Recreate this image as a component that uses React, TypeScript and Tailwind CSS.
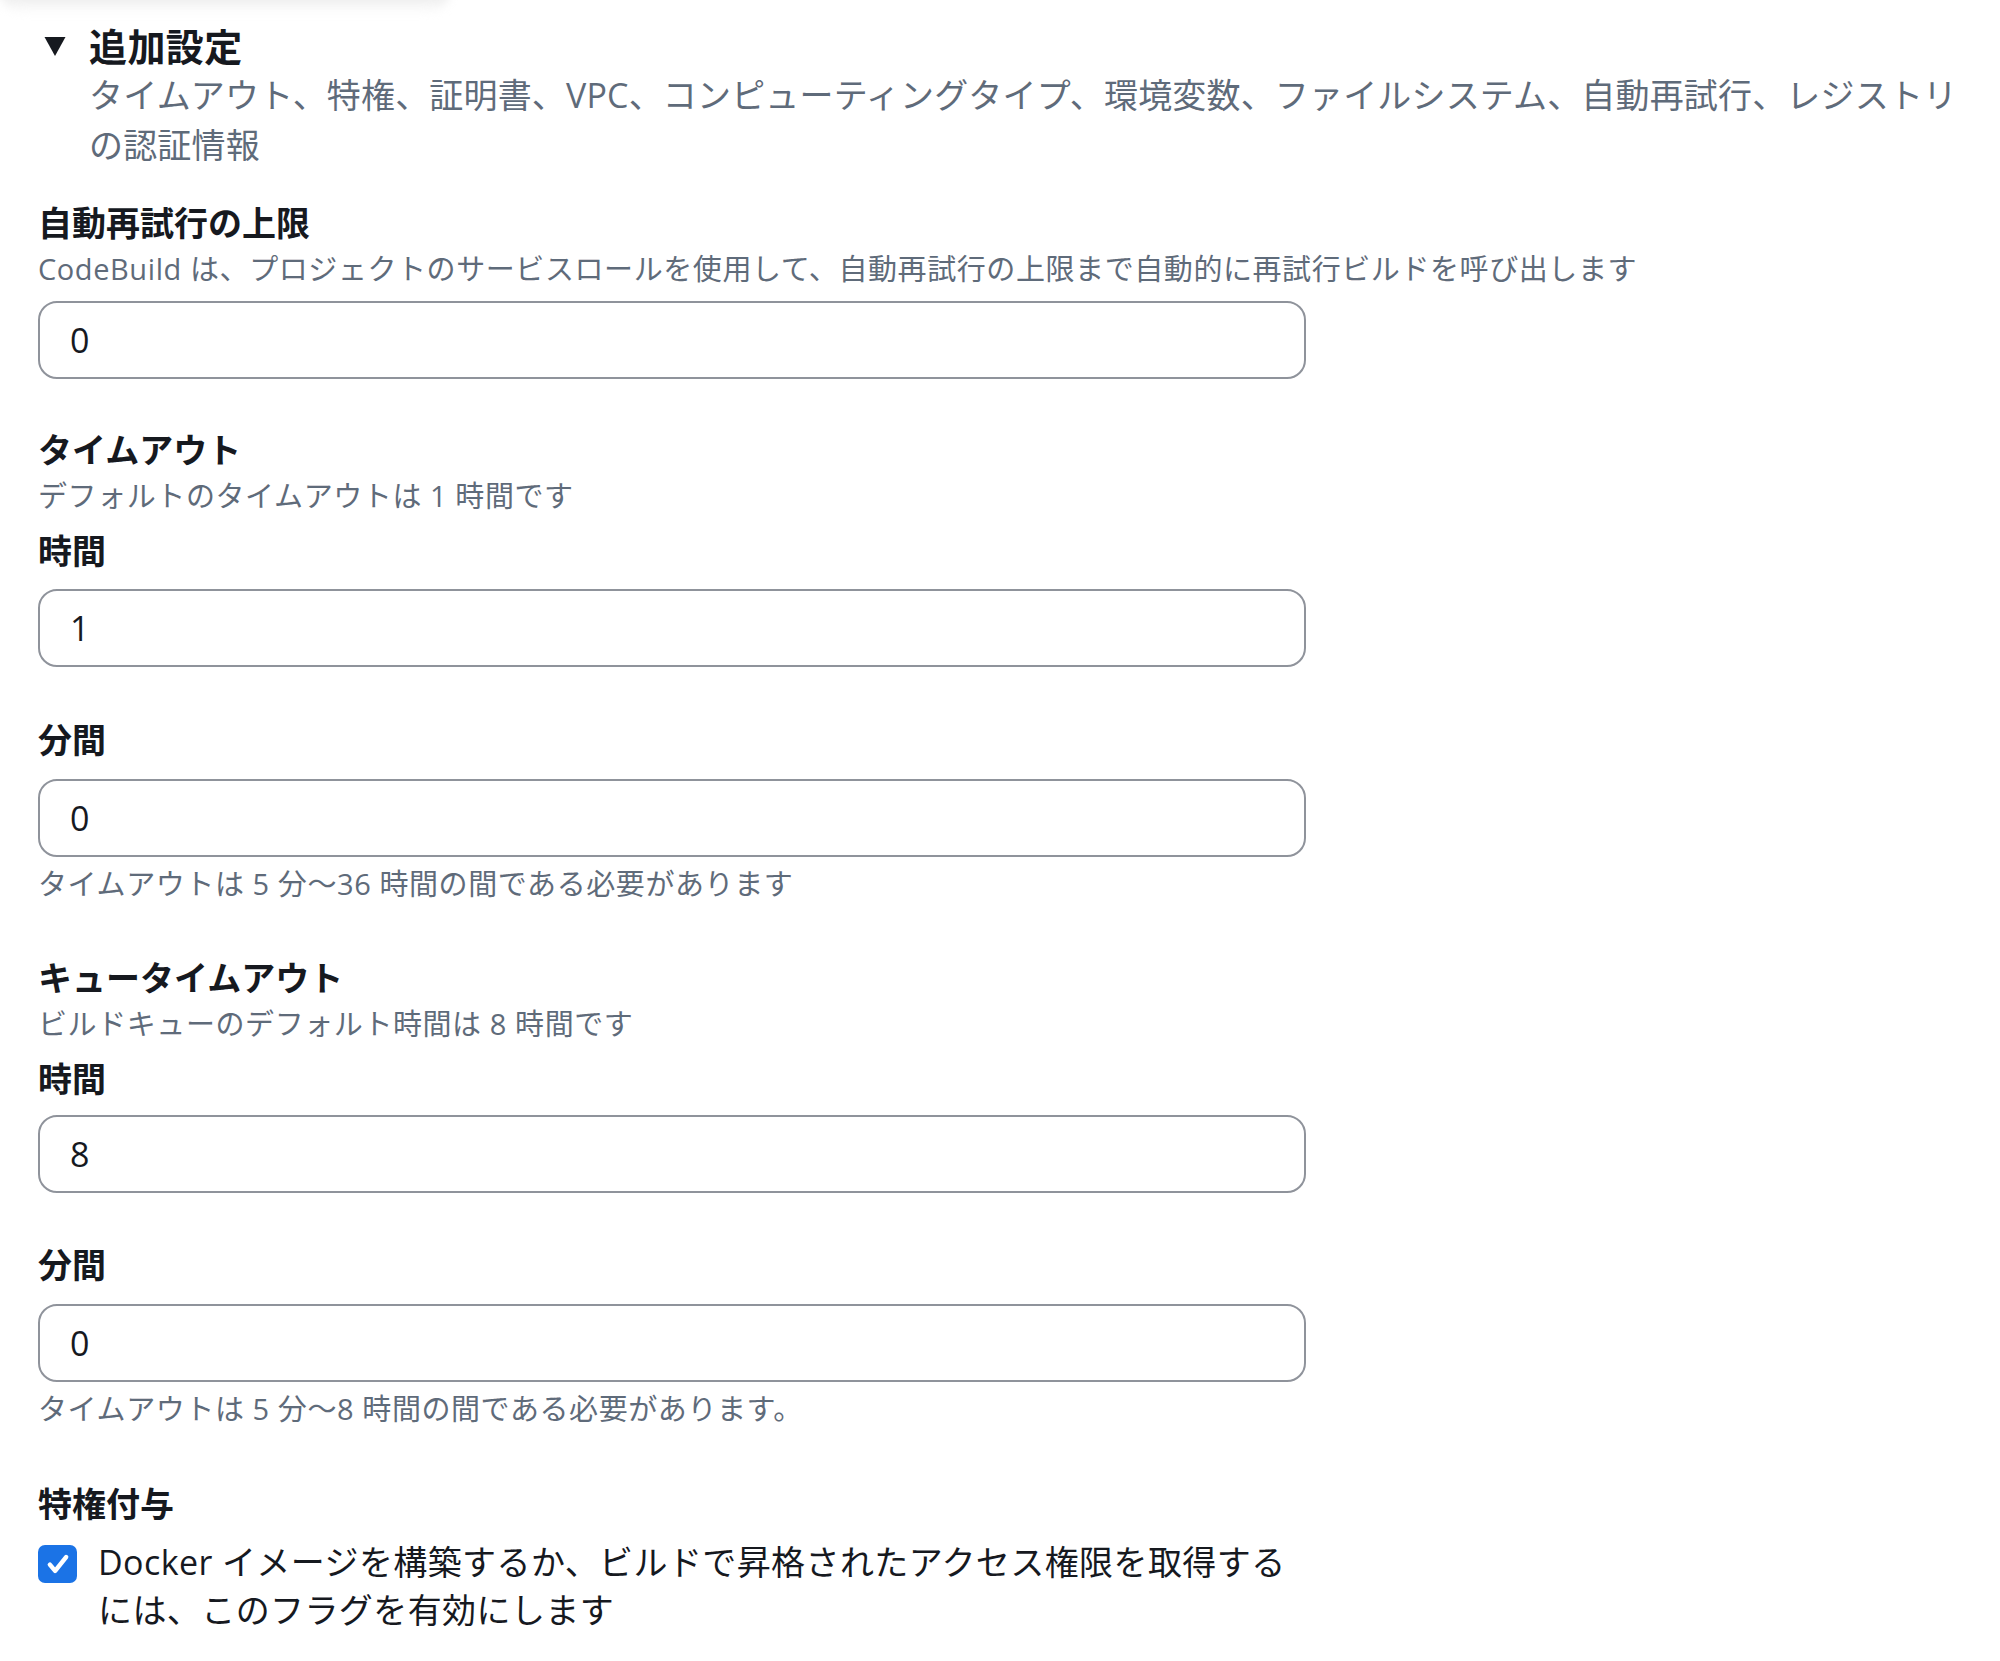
import React from "react";

const labelCls = "text-[34px] leading-[48px] font-bold text-[#16191f]";
const descCls = "text-[29px] leading-[38px] tracking-[0.02em] text-[#5f6b7a]";

function NumberInput({ value, className = "" }: { value: string; className?: string }) {
  return (
    <input
      readOnly
      value={value}
      className={`block h-[78px] w-[1268px] rounded-[19px] border-2 border-[#8f939b] bg-white pl-[30px] text-[34px] text-[#16191f] outline-none ${className}`}
    />
  );
}

function Checkbox() {
  return (
    <div className="mt-[7px] flex h-[38px] w-[39px] shrink-0 items-center justify-center rounded-[7px] bg-[#1b73e6]">
      <svg viewBox="0 0 24 24" className="h-[30px] w-[30px]" fill="none">
        <path d="M5.5 12.5l4.2 5L18.5 6.5" stroke="white" strokeWidth="3.6" strokeLinecap="round" strokeLinejoin="round" />
      </svg>
    </div>
  );
}

export default function App() {
  return (
    <div className="min-h-screen overflow-hidden bg-white font-['Open_Sans','Noto_Sans_CJK_JP',sans-serif] text-[#16191f]">
      {/* soft shadow left over from the card above */}
      <div className="-mt-[10px] h-[24px] w-[450px] rounded-b-[40px] bg-gradient-to-b from-[#e6e6e6] via-[#f3f3f3] to-white blur-[5px]" />

      <div className="mt-[8px] pl-[43px]">
        <div className="flex h-[48px] items-center gap-[22px]">
          <svg viewBox="0 0 24 22" className="h-[21px] w-[24px]">
            <path d="M1 1h22L12 21z" fill="#16191f" />
          </svg>
          <h2 className="text-[38px] font-bold leading-[48px] tracking-[0.01em] text-[#16191f]">追加設定</h2>
        </div>
        <p className="pl-[46px] text-[34px] leading-[50px] tracking-[0.005em] text-[#5f6b7a] whitespace-nowrap">
          タイムアウト、特権、証明書、VPC、コンピューティングタイプ、環境変数、ファイルシステム、自動再試行、レジストリ
          <br />
          の認証情報
        </p>
      </div>

      <div className="mt-[29px] flex flex-col pl-[38px] pb-[30px]">
        {/* 自動再試行の上限 */}
        <div className={labelCls}>自動再試行の上限</div>
        <div className={`mt-[3px] ${descCls}`}>
          CodeBuild は、プロジェクトのサービスロールを使用して、自動再試行の上限まで自動的に再試行ビルドを呼び出します
        </div>
        <NumberInput value="0" className="mt-[13px]" />

        {/* タイムアウト */}
        <div className={`mt-[47px] ${labelCls}`}>タイムアウト</div>
        <div className={`mt-[3px] ${descCls}`}>デフォルトのタイムアウトは 1 時間です</div>
        <div className={`mt-[12px] ${labelCls}`}>時間</div>
        <NumberInput value="1" className="mt-[14px]" />
        <div className={`mt-[49px] ${labelCls}`}>分間</div>
        <NumberInput value="0" className="mt-[15px]" />
        <div className={`mt-[8px] ${descCls}`}>タイムアウトは 5 分〜36 時間の間である必要があります</div>

        {/* キュータイムアウト */}
        <div className={`mt-[51px] ${labelCls}`}>キュータイムアウト</div>
        <div className={`mt-[3px] ${descCls}`}>ビルドキューのデフォルト時間は 8 時間です</div>
        <div className={`mt-[12px] ${labelCls}`}>時間</div>
        <NumberInput value="8" className="mt-[12px]" />
        <div className={`mt-[48px] ${labelCls}`}>分間</div>
        <NumberInput value="0" className="mt-[15px]" />
        <div className={`mt-[8px] ${descCls}`}>タイムアウトは 5 分〜8 時間の間である必要があります。</div>

        {/* 特権付与 */}
        <div className={`mt-[52px] ${labelCls}`}>特権付与</div>
        <div className="mt-[10px] flex gap-[21px]">
          <Checkbox />
          <p className="text-[34px] leading-[48px] tracking-[0.012em] text-[#16191f] whitespace-nowrap">
            Docker イメージを構築するか、ビルドで昇格されたアクセス権限を取得する
            <br />
            には、このフラグを有効にします
          </p>
        </div>
      </div>
    </div>
  );
}
